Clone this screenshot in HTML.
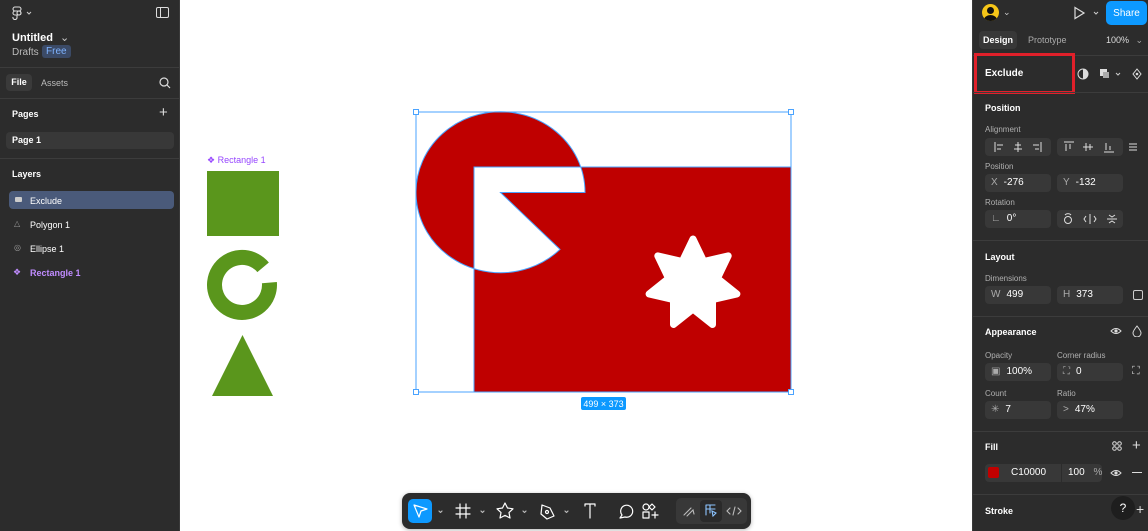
<!DOCTYPE html>
<html><head><meta charset="utf-8"><style>
*{box-sizing:border-box;margin:0;padding:0}
body{width:1148px;height:531px;overflow:hidden;font-family:"Liberation Sans",sans-serif;background:#fff;position:relative;font-size:11px;color:#fff}
.lp{position:absolute;left:0;top:0;width:180px;height:531px;background:#2c2c2c;border-right:1px solid #3a3a3a}
.rp{position:absolute;left:972px;top:0;width:176px;height:531px;background:#2c2c2c;border-left:1px solid #3a3a3a}
.a{position:absolute}
.hr{position:absolute;left:0;right:0;height:1px;background:#3c3c3c}
.b{font-weight:bold}
.lbl{color:#b0b0b0;font-size:8px}
.inp{position:absolute;height:18px;background:#383838;border-radius:4px;font-size:10px;line-height:18px;padding-left:6px}
.inp span{color:#aaa;margin-right:6px}
.g{color:#ccc}
</style></head><body>
<div class="lp">
  <svg class="a" style="left:12px;top:6px" width="26" height="14" viewBox="0 0 26 14"><g fill="none" stroke="#ddd" stroke-width="1.1"><rect x="1" y="1" width="8" height="4" rx="2"/><rect x="1" y="5" width="8" height="4" rx="2"/><path d="M5 9v3a2 2 0 1 1-4-1"/><circle cx="7" cy="7" r="2"/></g><path d="M15 6l2 2 2-2" stroke="#ccc" fill="none"/></svg>
  <svg class="a" style="left:156px;top:7px" width="13" height="11"><rect x=".5" y=".5" width="12" height="10" rx="1.5" fill="none" stroke="#ddd"/><line x1="4.5" y1="1" x2="4.5" y2="10" stroke="#ddd"/></svg>
  <div class="a b" style="left:12px;top:31px;font-size:11px">Untitled <span style="font-weight:normal;color:#ccc;margin-left:4px">⌄</span></div>
  <div class="a" style="left:12px;top:47px;color:#bbb;font-size:10px">Drafts</div>
  <div class="a" style="left:42px;top:45px;background:#3b4a66;color:#7eb3ff;font-size:10px;padding:1px 4px;border-radius:3px">Free</div>
  <div class="hr" style="top:67px"></div>
  <div class="a b" style="left:6px;top:74px;width:26px;height:17px;background:#3a3a3a;border-radius:4px;text-align:center;line-height:17px;font-size:9px">File</div>
  <div class="a" style="left:41px;top:78px;color:#bbb;font-size:9px">Assets</div>
  <svg class="a" style="left:159px;top:77px" width="12" height="12"><circle cx="5" cy="5" r="4" fill="none" stroke="#ddd" stroke-width="1.2"/><line x1="8" y1="8" x2="11" y2="11" stroke="#ddd" stroke-width="1.2"/></svg>
  <div class="hr" style="top:98px"></div>
  <div class="a b" style="left:12px;top:109px;font-size:9px">Pages</div>
  <div class="a" style="left:159px;top:104px;font-size:15px;color:#ddd">+</div>
  <div class="a b" style="left:6px;top:132px;width:168px;height:17px;background:#383838;border-radius:4px;padding-left:6px;line-height:17px;font-size:9px">Page 1</div>
  <div class="hr" style="top:158px"></div>
  <div class="a b" style="left:12px;top:169px;font-size:9px">Layers</div>
  <div class="a" style="left:9px;top:191px;width:165px;height:18px;background:#4a5a7a;border-radius:4px"></div>
  <div class="a" style="left:15px;top:197px;width:7px;height:5px;background:#ccc;border-radius:1px"></div>
  <div class="a" style="left:30px;top:196px;font-size:9px">Exclude</div>
  <div class="a" style="left:14px;top:219px;font-size:8px;color:#999">△</div>
  <div class="a" style="left:30px;top:220px;font-size:9px">Polygon 1</div>
  <div class="a" style="left:14px;top:243px;font-size:8px;color:#999">◎</div>
  <div class="a" style="left:30px;top:244px;font-size:9px">Ellipse 1</div>
  <div class="a" style="left:13px;top:267px;font-size:9px;color:#c08cff">❖</div>
  <div class="a b" style="left:30px;top:268px;font-size:9px;color:#c08cff">Rectangle 1</div>
</div>

<svg class="a" style="left:0;top:0" width="1148" height="531">
  <text x="207" y="163" font-size="9" fill="#9747ff" font-family="Liberation Sans">❖ Rectangle 1</text>
  <rect x="207" y="171" width="72" height="65" fill="#5a961c"/>
  <path d="M269.4,282.6 A27.5,27.5 0 1 1 263.1,267.3" fill="none" stroke="#5a961c" stroke-width="15"/>
  <polygon points="242.5,335 273,396 212,396" fill="#5a961c"/>
  <path fill-rule="evenodd" fill="#bf0000" stroke="#4aa3ff" stroke-width="1" d="M500.5,192.5 L560,249.4 A84.5,80.5 0 1 1 585,192.5 Z M474,167 H791 V392 H474 Z"/>
  <polygon fill="#fff" stroke="#fff" stroke-width="7" stroke-linejoin="round" points="693,239 703.8,261.5 728.2,255.9 717.4,278.4 736.9,294 712.5,299.6 712.5,324.5 693,309 673.5,324.5 673.5,299.6 649.1,294 668.6,278.4 657.8,255.9 682.2,261.5"/>
  <rect x="416" y="112" width="375" height="280" fill="none" stroke="#4aa3ff" stroke-width="1"/>
  <g fill="#fff" stroke="#4aa3ff"><rect x="413.5" y="109.5" width="5" height="5"/><rect x="788.5" y="109.5" width="5" height="5"/><rect x="413.5" y="389.5" width="5" height="5"/><rect x="788.5" y="389.5" width="5" height="5"/></g>
  <rect x="581" y="397" width="45" height="13" rx="2" fill="#0d99ff"/>
  <text x="603.5" y="407" font-size="9" fill="#fff" text-anchor="middle" font-family="Liberation Sans">499 × 373</text>
</svg>

<div class="a" style="left:402px;top:493px;width:349px;height:36px;background:#2c2c2c;border-radius:8px;box-shadow:0 1px 4px rgba(0,0,0,.3)"></div>
<div class="a" style="left:408px;top:499px;width:24px;height:24px;background:#0d99ff;border-radius:5px"></div>
<svg class="a" style="left:402px;top:493px" width="349" height="36">
 <g fill="none" stroke="#fff" stroke-width="1.2" stroke-linejoin="round" stroke-linecap="round">
  <path d="M12 12l13 4-6 2-2 6z"/>
  <path d="M37 18l1.5 1.5 1.5-1.5M79 18l1.5 1.5 1.5-1.5M121 18l1.5 1.5 1.5-1.5M163 18l1.5 1.5 1.5-1.5" stroke="#bbb"/>
  <path d="M58 11v14M64 11v14M54 15h14M54 21h14"/>
  <path d="M103 10l2.5 5 5.5.8-4 3.8 1 5.4-5-2.6-5 2.6 1-5.4-4-3.8 5.5-.8z"/>
  <path d="M140 12l8 3 4 8-7 3-6-5z"/><circle cx="145" cy="19" r="1.5"/>
  <path d="M183 11h10M188 11v14M183 11v2M193 11v2"/>
  <path d="M218 25l2-3a6 6 0 1 1 3 2z"/>
  <circle cx="244" cy="14" r="3"/><path d="M250 11l3 3-3 3-3-3zM241 19h6v6h-6zM253 19v6M250 22h6"/>
 </g>
 <rect x="274" y="5" width="71" height="26" rx="5" fill="#383838"/>
 <rect x="298" y="7" width="22" height="22" rx="4" fill="#2a2a2a"/>
 <g fill="none" stroke="#bbb" stroke-width="1.1" stroke-linecap="round">
  <path d="M282 22l7-7M285 23l6-6 1 4"/>
  <path d="M304 12h9M304 12v10M308 12v8M304 16h9" stroke="#8cc4ff"/><path d="M310 18l4 2-3 3z" stroke="#8cc4ff"/>
  <path d="M328 15l-3 3 3 3M336 15l3 3-3 3M333 14l-2 8"/>
 </g>
</svg>

<div class="rp">
  <div class="a" style="left:9px;top:4px;width:17px;height:17px;border-radius:50%;background:#f5c518;overflow:hidden"><div class="a" style="left:5px;top:3px;width:7px;height:7px;border-radius:50%;background:#111"></div><div class="a" style="left:2px;top:11px;width:13px;height:10px;border-radius:50%;background:#111"></div></div>
  <div class="a" style="left:30px;top:7px;color:#ccc;font-size:9px">⌄</div>
  <svg class="a" style="left:100px;top:6px" width="30" height="14"><path d="M2 1.5l9 5.5-9 5.5z" fill="none" stroke="#ddd" stroke-width="1.2"/><path d="M21 6l2 2 2-2" stroke="#ccc" fill="none"/></svg>
  <div class="a" style="left:133px;top:1px;width:41px;height:24px;background:#0d99ff;border-radius:5px;display:flex;align-items:center;justify-content:center;font-size:10px">Share</div>
  <div class="a b" style="left:6px;top:31px;width:38px;height:18px;background:#383838;border-radius:4px;text-align:center;line-height:18px;font-size:9px">Design</div>
  <div class="a" style="left:55px;top:35px;color:#aaa;font-size:9px">Prototype</div>
  <div class="a" style="left:133px;top:35px;font-size:9px;color:#ddd">100% <span style="color:#aaa;margin-left:4px">⌄</span></div>
  <div class="hr" style="top:55px"></div>
  <div class="a" style="left:1px;top:53px;width:101px;height:41px;border:3px solid #e0202a"></div>
  <div class="a b" style="left:12px;top:68px;font-size:10px">Exclude</div>
  <svg class="a" style="left:104px;top:67px" width="70" height="14"><circle cx="6" cy="7" r="5" fill="none" stroke="#ddd"/><path d="M6 2a5 5 0 0 1 0 10z" fill="#ddd"/><rect x="23" y="2" width="7" height="7" fill="#ddd"/><rect x="26" y="5" width="6" height="6" fill="#aaa"/><path d="M39 6l2 2 2-2" stroke="#ccc" fill="none"/><path d="M60 2l4 5-4 5-4-5z" fill="none" stroke="#ddd"/><circle cx="60" cy="7" r="1.3" fill="#ddd"/></svg>
  <div class="hr" style="top:92px"></div>
  <div class="a b" style="left:12px;top:103px;font-size:9px">Position</div>
  <div class="a lbl" style="left:12px;top:125px">Alignment</div>
  <div class="a" style="left:12px;top:138px;width:66px;height:18px;background:#383838;border-radius:4px"></div>
  <div class="a" style="left:84px;top:138px;width:66px;height:18px;background:#383838;border-radius:4px"></div>
  <svg class="a" style="left:12px;top:138px" width="166" height="18"><g stroke="#ddd" stroke-width="1" fill="none">
    <path d="M10 4v10M12 7h6M12 11h4"/><path d="M33 4v10M30 7h6M29 11h8"/><path d="M56 4v10M48 7h6M50 11h4"/>
    <path d="M79 4h10M81 6v7M85 6v5"/><path d="M98 9h10M101 5v8M105 6v6"/><path d="M119 14h10M121 5v7M125 8v4"/>
    <path d="M144 6h8M144 9h8M144 12h8"/></g></svg>
  <div class="a lbl" style="left:12px;top:162px">Position</div>
  <div class="inp" style="left:12px;top:174px;width:66px"><span>X</span>-276</div>
  <div class="inp" style="left:84px;top:174px;width:66px"><span>Y</span>-132</div>
  <div class="a lbl" style="left:12px;top:198px">Rotation</div>
  <div class="inp" style="left:12px;top:210px;width:66px"><span>∟</span>0°</div>
  <div class="a" style="left:84px;top:210px;width:66px;height:18px;background:#383838;border-radius:4px"></div>
  <svg class="a" style="left:84px;top:210px" width="66" height="18"><g stroke="#ddd" stroke-width="1" fill="none">
    <circle cx="11" cy="10" r="3.5"/><path d="M8 5a4 4 0 0 1 6 0"/>
    <path d="M33 4v10M29 6l-2 3 2 3M37 6l2 3-2 3"/><path d="M50 9h10M52 5l3 2 3-2M52 13l3-2 3 2"/></g></svg>
  <div class="hr" style="top:240px"></div>
  <div class="a b" style="left:12px;top:252px;font-size:9px">Layout</div>
  <div class="a lbl" style="left:12px;top:274px">Dimensions</div>
  <div class="inp" style="left:12px;top:286px;width:66px"><span>W</span>499</div>
  <div class="inp" style="left:84px;top:286px;width:66px"><span>H</span>373</div>
  <div class="a" style="left:160px;top:290px;width:10px;height:10px;border:1px solid #ccc;border-radius:2px"></div>
  <div class="hr" style="top:316px"></div>
  <div class="a b" style="left:12px;top:327px;font-size:9px">Appearance</div>
  <svg class="a" style="left:137px;top:325px" width="36" height="12"><path d="M1 6q5-5 10 0q-5 5-10 0z" fill="none" stroke="#ddd"/><circle cx="6" cy="6" r="1.6" fill="#ddd"/><path d="M27 1q-4 5-4 7a4 4 0 0 0 8 0q0-2-4-7z" fill="none" stroke="#ddd"/></svg>
  <div class="a lbl" style="left:12px;top:351px">Opacity</div>
  <div class="a lbl" style="left:84px;top:351px">Corner radius</div>
  <div class="inp" style="left:12px;top:363px;width:66px"><span>▣</span>100%</div>
  <div class="inp" style="left:84px;top:363px;width:66px"><span>⛶</span>0</div>
  <div class="a g" style="left:159px;top:365px;font-size:11px">⛶</div>
  <div class="a lbl" style="left:12px;top:389px">Count</div>
  <div class="a lbl" style="left:84px;top:389px">Ratio</div>
  <div class="inp" style="left:12px;top:401px;width:66px"><span>✳</span>7</div>
  <div class="inp" style="left:84px;top:401px;width:66px"><span>&gt;</span>47%</div>
  <div class="hr" style="top:431px"></div>
  <div class="a b" style="left:12px;top:442px;font-size:9px">Fill</div>
  <svg class="a" style="left:139px;top:441px" width="10" height="10"><g fill="none" stroke="#ddd"><circle cx="2.5" cy="2.5" r="1.8"/><circle cx="7.5" cy="2.5" r="1.8"/><circle cx="2.5" cy="7.5" r="1.8"/><circle cx="7.5" cy="7.5" r="1.8"/></g></svg>
  <div class="a" style="left:159px;top:437px;font-size:15px;color:#ddd">+</div>
  <div class="inp" style="left:12px;top:464px;width:117px;padding-left:26px">C10000</div>
  <div class="a" style="left:15px;top:467px;width:11px;height:11px;background:#c10000;border-radius:2px"></div>
  <div class="a" style="left:88px;top:464px;width:1px;height:18px;background:#2c2c2c"></div>
  <div class="a" style="left:95px;top:467px;font-size:10px">100 <span style="color:#aaa;margin-left:6px">%</span></div>
  <svg class="a" style="left:137px;top:467px" width="12" height="12"><path d="M1 6q5-5 10 0q-5 5-10 0z" fill="none" stroke="#ddd"/><circle cx="6" cy="6" r="1.6" fill="#ddd"/></svg>
  <div class="a" style="left:159px;top:472px;width:10px;height:1px;background:#ddd"></div>
  <div class="hr" style="top:494px"></div>
  <div class="a b" style="left:12px;top:506px;font-size:9px">Stroke</div>
  <div class="a" style="left:138px;top:496px;width:24px;height:24px;border-radius:50%;background:#1e1e1e;text-align:center;line-height:24px;font-size:12px">?</div>
  <div class="a" style="left:163px;top:501px;font-size:14px;color:#ddd">+</div>
</div>
</body></html>
